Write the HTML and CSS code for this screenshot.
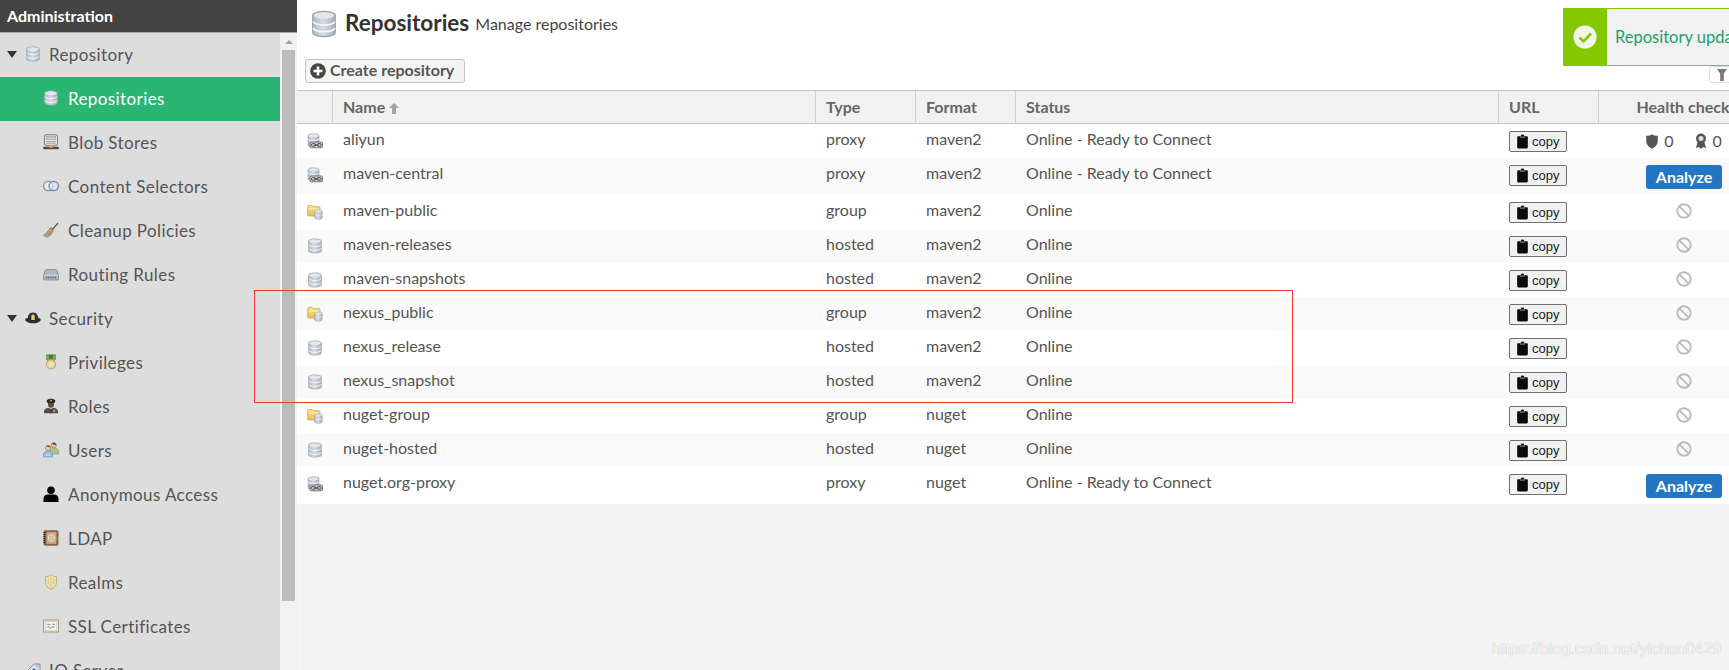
FILE: index.html
```html
<!DOCTYPE html>
<html lang="en">
<head>
<meta charset="utf-8">
<title>Repositories</title>
<link rel="stylesheet" href="styles.css">
</head>
<body>
<svg class="defs" width="0" height="0" aria-hidden="true">
  <defs>
    <linearGradient id="g-db" x1="0" x2="1" y1="0" y2="0"><stop offset="0" stop-color="#aeb8c3"/><stop offset=".45" stop-color="#d5dbe1"/><stop offset="1" stop-color="#a4aeb9"/></linearGradient>
    <linearGradient id="g-folder" x1="0" x2="0" y1="0" y2="1"><stop offset="0" stop-color="#fbe08e"/><stop offset="1" stop-color="#eebc4d"/></linearGradient>
  </defs>
  <symbol id="db" viewBox="0 0 16 16">
    <path d="M1.500 3.200C1.500 1.800 4.400.8 8 .8s6.500 1 6.500 2.400v9.600c0 1.400-2.900 2.400-6.500 2.400s-6.500-1-6.500-2.400z" fill="url(#g-db)" stroke="#98a2ad" stroke-width=".6"/>
    <ellipse cx="8" cy="3.200" rx="5.800" ry="1.800" fill="#e3e7eb"/>
    <path d="M1.700 6.700c1 1.200 3.400 1.900 6.300 1.900s5.300-.7 6.300-1.900M1.700 10.500c1 1.200 3.400 1.900 6.300 1.900s5.300-.7 6.300-1.900" fill="none" stroke="#f4f6f8" stroke-width="1"/>
  </symbol>
  <symbol id="proxy" viewBox="0 0 16 16">
    <path d="M1 2.700C1 1.500 3.300.7 6.500.7s5.500.8 5.500 2V12c0 1.200-2.300 2-5.500 2S1 13.200 1 12z" fill="url(#g-db)" stroke="#8c96a1" stroke-width=".5"/>
    <ellipse cx="6.500" cy="2.700" rx="4.900" ry="1.500" fill="#e3e7eb"/>
    <path d="M1.200 6.200c1 1 2.800 1.500 5.300 1.500s4.300-.5 5.300-1.500" fill="none" stroke="#f4f6f8"/>
    <rect x="3" y="9" width="12.600" height="5.800" rx="1.400" fill="#d7dade" stroke="#3f4347" stroke-width=".7"/>
    <rect x="4.300" y="10.700" width="4.300" height="2.500" rx="1.100" fill="none" stroke="#34383c" stroke-width=".9"/>
    <rect x="10" y="10.700" width="4.300" height="2.500" rx="1.100" fill="none" stroke="#34383c" stroke-width=".9"/>
    <path d="M7 12h4.500" stroke="#34383c" stroke-width=".9"/>
  </symbol>
  <symbol id="group" viewBox="0 0 16 16">
    <path d="M.7 3.500V2.200c0-.5.300-.8.800-.8h3.700l1.200 1.300h5.800c.5 0 .8.300.8.800V12H1.500c-.5 0-.8-.3-.8-.8z" fill="url(#g-folder)" stroke="#cf9a2e" stroke-width=".7"/>
    <path d="M1.400 5h10.900" stroke="#fff3c6" stroke-width="1"/>
    <path d="M7.500 7.500c0-.9 1.600-1.500 3.800-1.500s3.900.6 3.900 1.500v6.300c0 .9-1.700 1.500-3.900 1.500s-3.800-.6-3.800-1.500z" fill="url(#g-db)" stroke="#929ca7" stroke-width=".5"/>
    <ellipse cx="11.300" cy="7.500" rx="3.300" ry="1.100" fill="#e3e7eb"/>
    <path d="M7.700 10.500c.8.700 2 1 3.600 1s2.900-.3 3.700-1" fill="none" stroke="#f4f6f8" stroke-width=".7"/>
  </symbol>
  <symbol id="blob" viewBox="0 0 16 16">
    <rect x="1.500" y=".8" width="13" height="10.500" rx="1.500" fill="#e9e9e9" stroke="#6f6f6f" stroke-width=".9"/>
    <rect x="3.200" y="2.500" width="9.600" height="3" fill="#c8cdd2" stroke="#888" stroke-width=".5"/>
    <path d="M3.200 7.500h9.600M3.200 9.200h9.600" stroke="#8d8d8d" stroke-width=".8"/>
    <rect x=".3" y="12.700" width="15.400" height="2.500" fill="#4a4a4a"/>
    <rect x="6.300" y="11" width="3.400" height="3" fill="#d9a23c"/>
  </symbol>
  <symbol id="selector" viewBox="0 0 16 16">
    <circle cx="5.300" cy="8" r="4.700" fill="#eceef0" stroke="#7f868d" stroke-width="1.200"/>
    <circle cx="10.700" cy="8" r="4.700" fill="#dbe8f5" fill-opacity=".7" stroke="#5f81a5" stroke-width="1.200"/>
  </symbol>
  <symbol id="broom" viewBox="0 0 16 16">
    <path d="M9.500 6.500 14.500.6l1 .9-5.200 6z" fill="#6e5233"/>
    <path d="M8.300 5.300c1 .2 2.300 1.400 2.700 2.600l-1 1.300L6.900 6.600z" fill="#7f8560"/>
    <path d="M7 5.800 10.300 9c-.5 2.900-3.300 5.300-6.800 6.700l-.7-1.500-1.200.7-.3-1.300-1.300.2C2.600 11.600 5 9 7 5.800z" fill="#b9a480" stroke="#8d7959" stroke-width=".4"/>
    <path d="M5 9 3 13M6.800 9 4.800 14M8.500 9.500 6.300 13.300" stroke="#8d7959" stroke-width=".6"/>
  </symbol>
  <symbol id="routing" viewBox="0 0 16 16">
    <path d="M3.400 3.500h9.200c.6 0 1 .3 1.200.8l1.700 5v3.700c0 .6-.4 1-1 1H1.500c-.6 0-1-.4-1-1V9.300l1.700-5c.2-.5.600-.8 1.200-.8z" fill="#aab8c6" stroke="#6e7a86" stroke-width=".7"/>
    <path d="M1 9.200h14" stroke="#dfe5ea" stroke-width=".8"/>
    <path d="M3 11.500h10" stroke="#4d565f" stroke-width="1.300" stroke-dasharray="1 .8"/>
  </symbol>
  <symbol id="hat" viewBox="0 0 16 16">
    <path d="M2.700 8C3 4.300 5.200 2.500 8 2.500s5 1.800 5.300 5.500z" fill="#333"/>
    <path d="M.3 8.800C2 7.800 5 7.500 8 7.500s6 .3 7.700 1.300v1.600C14 12.300 11 13.300 8 13.300S2 12.300.3 10.400z" fill="#2e2e2e"/>
    <path d="M6.300 5.800v4.200h3.400V5.800L8 4.300z" fill="#e8cf79"/>
  </symbol>
  <symbol id="medal" viewBox="0 0 16 16">
    <path d="M3.500.8h9v4.500l-2 2h-5l-2-2z" fill="#7ea65c" stroke="#5b7f40" stroke-width=".6"/>
    <path d="M6 .8h4v5H6z" fill="#4d7a38"/>
    <circle cx="8" cy="10.300" r="4.700" fill="#e2cf96" stroke="#b59f62" stroke-width=".8"/>
    <circle cx="8" cy="10.300" r="2.500" fill="#f1e7c3"/>
  </symbol>
  <symbol id="officer" viewBox="0 0 16 16">
    <path d="M3.500 2.700C4.500 1.200 6.200.7 8 .7s3.500.5 4.500 2l-1 2.300h-7z" fill="#262b33"/>
    <circle cx="8" cy="2.600" r=".9" fill="#e1c050"/>
    <path d="M5 5h6v1.800c0 1.700-1.300 3-3 3s-3-1.300-3-3z" fill="#6a4a34"/>
    <path d="M1 15.300v-2c0-1.900 2-3.200 4.500-3.600L8 11l2.500-1.300c2.500.4 4.500 1.700 4.500 3.600v2z" fill="#4b5058"/>
    <path d="M8 11v4.300" stroke="#22262b" stroke-width=".7"/>
    <rect x="10.500" y="11.800" width="1.600" height="2" fill="#e1c050"/>
  </symbol>
  <symbol id="users" viewBox="0 0 16 16">
    <circle cx="10.800" cy="3.300" r="2.600" fill="#e2bd96" stroke="#80603f" stroke-width=".5"/>
    <path d="M10.800.7c1.700 0 2.600 1 2.600 2-1.200.1-3.300-.3-4.300-.8.300-.7 1-1.200 1.700-1.200z" fill="#5b4633"/>
    <path d="M7 12V9c0-1.700 1.800-2.900 3.800-2.900s4.700 1.200 4.700 2.900v3z" fill="#a9c591" stroke="#6d8a56" stroke-width=".5"/>
    <circle cx="5" cy="6" r="2.600" fill="#eccaa5" stroke="#80603f" stroke-width=".5"/>
    <path d="M5 3.400c1.700 0 2.600 1 2.600 2-1.200.1-3.300-.3-4.300-.8.300-.7 1-1.200 1.700-1.200z" fill="#7d5a38"/>
    <path d="M.5 15v-3c0-1.700 2-2.900 4.500-2.900S9.500 10.300 9.500 12v3z" fill="#9dbde0" stroke="#5c7fa5" stroke-width=".5"/>
    <path d="M3 13h4" stroke="#fff" stroke-width=".8"/>
  </symbol>
  <symbol id="person" viewBox="0 0 16 16">
    <circle cx="8" cy="4.200" r="3.800" fill="#000"/>
    <path d="M.5 16v-3.300C.5 10 2.800 8.500 5 8.500h6c2.200 0 4.500 1.500 4.500 4.200V16z" fill="#000"/>
  </symbol>
  <symbol id="ldap" viewBox="0 0 16 16">
    <rect x="1" y=".7" width="14" height="14.600" rx="1" fill="#8f6c43" stroke="#5f4529" stroke-width=".6"/>
    <rect x="3.500" y="2.200" width="9.800" height="11.600" fill="#c9ad85"/>
    <path d="M.3 2.500h2.200M.3 4.500h2.200M.3 6.500h2.200M.3 8.500h2.200M.3 10.500h2.200M.3 12.500h2.200" stroke="#2f261b" stroke-width=".9"/>
    <rect x="14" y="3" width="1.500" height="3" fill="#b9504a"/>
    <rect x="14" y="7" width="1.500" height="3" fill="#7b9c57"/>
    <circle cx="8.300" cy="8" r="3.200" fill="none" stroke="#f1e6d3" stroke-width="1"/>
    <circle cx="8.300" cy="8" r="1.200" fill="none" stroke="#f1e6d3" stroke-width=".8"/>
  </symbol>
  <symbol id="realm" viewBox="0 0 16 16">
    <path d="M8 .7c1.300 1.300 3.500 2 5.500 2v5.800c0 3-2.500 5.500-5.500 6.900-3-1.400-5.500-3.900-5.500-6.900V2.700c2 0 4.200-.7 5.500-2z" fill="#efe3b5" stroke="#bda96f" stroke-width=".9"/>
    <path d="M8 3v10.500M5.200 4.500v5.500M10.800 4.500v5.500" stroke="#d5c388" stroke-width="1.100"/>
  </symbol>
  <symbol id="cert" viewBox="0 0 16 16">
    <rect x=".5" y="2" width="15" height="12" fill="#f2ead8" stroke="#a8977b" stroke-width="1"/>
    <rect x="2.300" y="3.800" width="11.400" height="8.400" fill="#fbf8f0" stroke="#c2b59b" stroke-width=".5"/>
    <path d="M4 6.300h3.500M4 9.500c1-1.500 2-1.500 2.500 0s1.500.5 2-.5h3.500M9 6.300h3" stroke="#566a86" stroke-width=".8" fill="none"/>
  </symbol>
  <symbol id="iq" viewBox="0 0 16 16">
    <path d="M1 10 9 2l6 0v6l-7 7z" fill="#dfe3e7" stroke="#777" stroke-width=".8"/>
    <path d="M5 10l4-4 3 3-4 4z" fill="#3f7cbf"/>
    <circle cx="12.500" cy="4" r="1" fill="#fff" stroke="#666" stroke-width=".5"/>
  </symbol>
  <symbol id="plus" viewBox="0 0 16 16">
    <circle cx="8" cy="8" r="7.800" fill="#444"/>
    <path d="M8 3.500v9M3.500 8h9" stroke="#fff" stroke-width="2.600"/>
  </symbol>
  <symbol id="clip" viewBox="0 0 12 16">
    <path d="M1.400 2.300h2.700V1.800C4.100.9 4.900.3 6 .3s1.900.6 1.900 1.500v.5h2.700c.7 0 1.200.5 1.200 1.200v10.800c0 .7-.5 1.200-1.200 1.200H1.400c-.7 0-1.200-.5-1.200-1.200V3.500c0-.7.500-1.200 1.200-1.200z" fill="#0b0b0b"/>
    <path d="M3.300 3.200h5.400" stroke="#e8e8e8" stroke-width=".7"/>
  </symbol>
  <symbol id="ban" viewBox="0 0 16 16">
    <circle cx="8" cy="8" r="6.700" fill="none" stroke="#bcbcbc" stroke-width="1.900"/>
    <path d="M3.400 3.400 12.600 12.600" stroke="#bcbcbc" stroke-width="1.900"/>
  </symbol>
  <symbol id="shield" viewBox="0 0 12 15">
    <path d="M6 .3c1.300 1 3.600 1.500 5.800 1.500v5.400c0 3.200-2.600 5.800-5.800 7.500C2.800 13 .2 10.400.2 7.200V1.800C2.400 1.800 4.700 1.300 6 .3z" fill="#555"/>
  </symbol>
  <symbol id="ribbon" viewBox="0 0 12 16">
    <path d="M2.800 8.500.9 15l3-1 2.100 2 2.100-2 3 1-1.900-6.500z" fill="#555"/>
    <circle cx="6" cy="5.500" r="5" fill="#555"/>
    <circle cx="6" cy="5.500" r="2.500" fill="#ddd"/>
  </symbol>
  <symbol id="check" viewBox="0 0 24 24">
    <circle cx="12" cy="12" r="11.600" fill="#f2f5ea"/>
    <path d="M6.500 12.500 10.500 16.500 18 8.500" fill="none" stroke="#84c900" stroke-width="2.600"/>
  </symbol>
  <symbol id="filter" viewBox="0 0 10 12">
    <path d="M0 0h10L6.800 4.500V12H3.200V4.500z" fill="#777"/>
  </symbol>
  <symbol id="up" viewBox="0 0 10 11">
    <path d="M5 0 10 5H7v6H3V5H0z" fill="#a3a3a3"/>
  </symbol>
</svg>

<div class="app">
  <aside class="side">
    <div class="side-title">Administration</div>
    <div class="side-body">
      <nav class="nav">
        <a class="item group"><span class="caret"></span><svg class="ic"><use href="#db"/></svg>Repository</a>
        <a class="item child active"><svg class="ic"><use href="#db"/></svg>Repositories</a>
        <a class="item child"><svg class="ic"><use href="#blob"/></svg>Blob Stores</a>
        <a class="item child"><svg class="ic"><use href="#selector"/></svg>Content Selectors</a>
        <a class="item child"><svg class="ic"><use href="#broom"/></svg>Cleanup Policies</a>
        <a class="item child"><svg class="ic"><use href="#routing"/></svg>Routing Rules</a>
        <a class="item group"><span class="caret"></span><svg class="ic"><use href="#hat"/></svg>Security</a>
        <a class="item child"><svg class="ic"><use href="#medal"/></svg>Privileges</a>
        <a class="item child"><svg class="ic"><use href="#officer"/></svg>Roles</a>
        <a class="item child"><svg class="ic"><use href="#users"/></svg>Users</a>
        <a class="item child"><svg class="ic"><use href="#person"/></svg>Anonymous Access</a>
        <a class="item child"><svg class="ic"><use href="#ldap"/></svg>LDAP</a>
        <a class="item child"><svg class="ic"><use href="#realm"/></svg>Realms</a>
        <a class="item child"><svg class="ic"><use href="#cert"/></svg>SSL Certificates</a>
        <a class="item group nocaret"><svg class="ic"><use href="#iq"/></svg>IQ Server</a>
      </nav>
      <div class="scrollbar"><span class="sb-arrow"></span><span class="sb-thumb"></span></div>
    </div>
  </aside>

  <main class="main">
    <div class="content">
      <header class="page-head">
        <svg class="head-ic"><use href="#db"/></svg>
        <h1 class="page-title">Repositories</h1>
        <span class="page-sub">Manage repositories</span>
      </header>
      <div class="toolbar">
        <button class="create"><svg class="create-ic"><use href="#plus"/></svg>Create repository</button>
        <span class="filter"><svg class="filter-ic"><use href="#filter"/></svg></span>
      </div>
      <table class="grid">
        <colgroup>
          <col class="c-icon"><col class="c-name"><col class="c-type"><col class="c-format"><col class="c-status"><col class="c-url"><col class="c-health">
        </colgroup>
        <thead>
          <tr><th></th><th class="th-name">Name<svg class="sort"><use href="#up"/></svg></th><th>Type</th><th>Format</th><th>Status</th><th>URL</th><th class="center">Health check</th></tr>
        </thead>
        <tbody>
          <tr><td class="t-ic"><svg class="row-ic"><use href="#proxy"/></svg></td><td>aliyun</td><td>proxy</td><td>maven2</td><td>Online - Ready to Connect</td><td class="t-btn"><button class="copy"><svg class="clip"><use href="#clip"/></svg>copy</button></td>
            <td class="center"><span class="health"><svg class="h-shield"><use href="#shield"/></svg><span>0</span><svg class="h-ribbon"><use href="#ribbon"/></svg><span>0</span></span></td></tr>
          <tr><td class="t-ic"><svg class="row-ic"><use href="#proxy"/></svg></td><td>maven-central</td><td>proxy</td><td>maven2</td><td>Online - Ready to Connect</td><td class="t-btn"><button class="copy"><svg class="clip"><use href="#clip"/></svg>copy</button></td>
            <td class="center"><button class="analyze">Analyze</button></td></tr>
          <tr><td class="t-ic"><svg class="row-ic"><use href="#group"/></svg></td><td>maven-public</td><td>group</td><td>maven2</td><td>Online</td><td class="t-btn"><button class="copy"><svg class="clip"><use href="#clip"/></svg>copy</button></td><td class="center"><svg class="ban"><use href="#ban"/></svg></td></tr>
          <tr><td class="t-ic"><svg class="row-ic"><use href="#db"/></svg></td><td>maven-releases</td><td>hosted</td><td>maven2</td><td>Online</td><td class="t-btn"><button class="copy"><svg class="clip"><use href="#clip"/></svg>copy</button></td><td class="center"><svg class="ban"><use href="#ban"/></svg></td></tr>
          <tr><td class="t-ic"><svg class="row-ic"><use href="#db"/></svg></td><td>maven-snapshots</td><td>hosted</td><td>maven2</td><td>Online</td><td class="t-btn"><button class="copy"><svg class="clip"><use href="#clip"/></svg>copy</button></td><td class="center"><svg class="ban"><use href="#ban"/></svg></td></tr>
          <tr><td class="t-ic"><svg class="row-ic"><use href="#group"/></svg></td><td>nexus_public</td><td>group</td><td>maven2</td><td>Online</td><td class="t-btn"><button class="copy"><svg class="clip"><use href="#clip"/></svg>copy</button></td><td class="center"><svg class="ban"><use href="#ban"/></svg></td></tr>
          <tr><td class="t-ic"><svg class="row-ic"><use href="#db"/></svg></td><td>nexus_release</td><td>hosted</td><td>maven2</td><td>Online</td><td class="t-btn"><button class="copy"><svg class="clip"><use href="#clip"/></svg>copy</button></td><td class="center"><svg class="ban"><use href="#ban"/></svg></td></tr>
          <tr><td class="t-ic"><svg class="row-ic"><use href="#db"/></svg></td><td>nexus_snapshot</td><td>hosted</td><td>maven2</td><td>Online</td><td class="t-btn"><button class="copy"><svg class="clip"><use href="#clip"/></svg>copy</button></td><td class="center"><svg class="ban"><use href="#ban"/></svg></td></tr>
          <tr><td class="t-ic"><svg class="row-ic"><use href="#group"/></svg></td><td>nuget-group</td><td>group</td><td>nuget</td><td>Online</td><td class="t-btn"><button class="copy"><svg class="clip"><use href="#clip"/></svg>copy</button></td><td class="center"><svg class="ban"><use href="#ban"/></svg></td></tr>
          <tr><td class="t-ic"><svg class="row-ic"><use href="#db"/></svg></td><td>nuget-hosted</td><td>hosted</td><td>nuget</td><td>Online</td><td class="t-btn"><button class="copy"><svg class="clip"><use href="#clip"/></svg>copy</button></td><td class="center"><svg class="ban"><use href="#ban"/></svg></td></tr>
          <tr><td class="t-ic"><svg class="row-ic"><use href="#proxy"/></svg></td><td>nuget.org-proxy</td><td>proxy</td><td>nuget</td><td>Online - Ready to Connect</td><td class="t-btn"><button class="copy"><svg class="clip"><use href="#clip"/></svg>copy</button></td><td class="center"><button class="analyze">Analyze</button></td></tr>
        </tbody>
      </table>
    </div>
  </main>
</div>

<div class="toast"><span class="toast-flag"><svg class="toast-ic"><use href="#check"/></svg></span><span class="toast-text">Repository updated</span></div>
<div class="redbox"></div>
<div class="watermark">https://blog.csdn.net/yichen0429</div>
</body>
</html>
```
FILE: styles.css
```css
* { box-sizing: border-box; }
html, body { margin: 0; height: 100%; overflow: hidden; }
body { font-family: Lato, "Open Sans", sans-serif; color: #555; background: #f4f4f4; }
.defs { position: absolute; }

.app { display: flex; height: 670px; overflow: hidden; }

/* sidebar */
.side { width: 297px; flex: none; display: flex; flex-direction: column; background: #ddd; }
.side-title { height: 33px; flex: none; padding: 6px 0 0 7px; background: #444; border-bottom: 1px solid #a9a9a9; color: #fff; font-size: 16px; font-weight: 700; line-height: 19px; }
.side-body { flex: 1; display: flex; min-height: 0; }
.nav { width: 280px; flex: none; }
.item { height: 44px; padding-bottom: 2px; display: flex; align-items: center; font-size: 17px; letter-spacing: .4px; color: #555; white-space: nowrap; }
.group { padding-left: 7px; }
.nocaret { padding-left: 25px; }
.child { padding-left: 43px; }
.child .ic { margin-right: 9px; }
.active { background: #2ab573; color: #fff; }
.caret { width: 0; height: 0; margin-right: 8px; border-left: 5px solid transparent; border-right: 5px solid transparent; border-top: 7px solid #333; }
.ic { width: 16px; height: 16px; margin-right: 8px; flex: none; }
.scrollbar { width: 17px; flex: none; background: #f1f1f1; display: flex; flex-direction: column; align-items: center; }
.sb-arrow { margin: 7px 0 6px; width: 0; height: 0; border-left: 4px solid transparent; border-right: 4px solid transparent; border-bottom: 4px solid #a3a3a3; }
.sb-thumb { width: 13px; height: 551px; background: #bcbcbc; }

/* main */
.main { flex: 1; min-width: 0; overflow: hidden; background: #f4f4f4; }
.content { width: 1473px; }
.page-head { height: 59px; padding: 9px 0 0 13px; display: flex; align-items: flex-start; background: #fff; }
.head-ic { width: 28px; height: 30px; margin-right: 7px; flex: none; }
.page-title { margin: 0 6px 0 0; font-size: 22.500px; line-height: 28px; font-weight: 700; color: #333; }
.page-sub { font-size: 16px; line-height: 30px; color: #444; }
.toolbar { height: 31px; display: flex; align-items: flex-start; padding-left: 8px; background: #fff; }
.create { width: 160px; height: 24px; padding: 0 0 3px 4px; display: flex; align-items: center; background: #f4f4f4; border: 1px solid #c4c4c4; border-radius: 3px; font: 700 16px Lato, sans-serif; color: #555; }
.create-ic { width: 16px; height: 16px; margin: 3px 4px 0 0; flex: none; }
.filter { margin-left: auto; width: 61px; height: 17px; margin-top: 7px; padding-left: 7px; background: #fff; border: 1px solid #ddd; border-radius: 3px; display: flex; align-items: flex-end; }
.filter-ic { width: 10px; height: 12px; margin-bottom: 1px; }

/* table */
.grid { width: 1473px; table-layout: fixed; border-collapse: separate; border-spacing: 0; font-size: 16px; }
.c-icon { width: 35px; } .c-name { width: 483px; } .c-type { width: 100px; } .c-format { width: 100px; }
.c-status { width: 483px; } .c-url { width: 100px; } .c-health { width: 172px; }
th { height: 34px; padding: 0 0 1px 10px; text-align: left; background: #f1f1f1; border-top: 1px solid #c4c4c4; border-bottom: 1px solid #c4c4c4; border-left: 1px solid #cfcfcf; font-size: 16px; font-weight: 700; color: #666; }
th:first-child { border-left: 0; }
th.center { padding: 0 3px 1px 0; text-align: center; }
.sort { width: 10px; height: 11px; margin-left: 4px; vertical-align: -1px; }
td { height: 34px; padding: 5px 0 0 11px; vertical-align: top; background: #fff; color: #555; line-height: 20px; white-space: nowrap; overflow: visible; }
tbody tr:nth-child(even) td { background: #fafafa; }
tbody tr:nth-child(2) td, tbody tr:nth-child(11) td { height: 37px; }
td.t-ic { padding: 9px 0 0 10px; }
td.t-btn { padding-top: 7px; }
td.center { padding: 0; text-align: center; vertical-align: top; }
.row-ic { width: 16px; height: 16px; display: block; }
.copy { width: 58px; height: 21px; padding: 0 0 1px 7px; display: flex; align-items: center; background: #f1f1f1; border: 1px solid #6f6f6f; border-radius: 2px; font: 13px "Liberation Sans", sans-serif; color: #222; }
.clip { width: 11px; height: 15px; margin-right: 4px; flex: none; }
.analyze { width: 76px; height: 24px; margin-top: 7px; padding: 0 0 2px; background: #2476c3; border: 0; border-radius: 3px; font: 700 16px Lato, sans-serif; color: #fff; }
.ban { width: 16px; height: 16px; margin-top: 8px; display: inline-block; }
.health { margin-top: 7px; display: inline-flex; align-items: center; font-size: 16px; color: #555; }
.h-shield { width: 12px; height: 15px; margin-right: 6px; }
.h-ribbon { width: 12px; height: 16px; margin: 0 6px 0 21px; }

/* overlays */
.toast { position: absolute; left: 1563px; top: 8px; width: 220px; height: 58px; display: flex; background: #f1f1f1; border: 1px solid #84c900; border-left: 0; }
.toast-flag { width: 44px; flex: none; background: #84c900; display: flex; align-items: center; justify-content: center; }
.toast-ic { width: 24px; height: 24px; }
.toast-text { padding: 18px 0 0 8px; font-size: 16.500px; line-height: 20px; color: #1e9f6c; white-space: nowrap; }
.redbox { position: absolute; left: 254px; top: 290px; width: 1039px; height: 113px; border: 1px solid #f33; pointer-events: none; }
.watermark { position: absolute; left: 1492px; top: 640px; font: 16px "Liberation Sans", sans-serif; color: #f8f8f8; text-shadow: 0 0 1px #a8a8a8; white-space: nowrap; }
```
